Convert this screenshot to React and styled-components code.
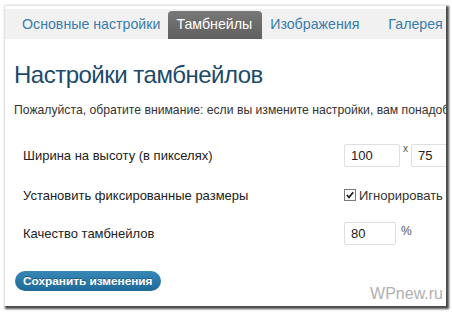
import React from 'react';
import styled, { createGlobalStyle } from 'styled-components';

const Global = createGlobalStyle`
  body {
    margin: 0;
    background: #fff;
    font-family: "Liberation Sans", Arial, sans-serif;
  }
`;

const Page = styled.div`
  width: 452px;
  height: 313px;
  padding: 5px 0 0 4px;
  box-sizing: border-box;
`;

const Frame = styled.div`
  width: 442px;
  height: 301px;
  box-sizing: border-box;
  border-top: 1px solid #e4e4e4;
  border-left: 1px solid #e4e4e4;
  box-shadow: 2px 2px 2px 1px #4a4a4a;
  background: #fff;
  overflow: hidden;
  position: relative;
`;

const TabBar = styled.div`
  display: flex;
  align-items: flex-end;
  margin-top: 3px;
  height: 30px;
  padding-left: 9px;
  background: #f1f1f1;
  white-space: nowrap;
`;

const Tab = styled.div`
  height: 28px;
  line-height: 27px;
  padding: ${p => p.$pad || '0 8px'};
  font-size: 14.2px;
  color: ${p => (p.$active ? '#fff' : '#3a7cab')};
  background: ${p => (p.$active ? 'linear-gradient(#787878, #5f5f5f)' : 'transparent')};
  border-radius: 4px 4px 0 0;
`;

const Content = styled.div`
  padding: 0 0 0 9px;
`;

const Heading = styled.h2`
  margin: 20px 0 0;
  font-size: 24px;
  letter-spacing: -0.5px;
  font-weight: normal;
  color: #1d4a6b;
  line-height: 32px;
`;

const Note = styled.p`
  margin: 12px 0 0;
  font-size: 12.2px;
  color: #333;
  white-space: nowrap;
`;

const Rows = styled.div`
  margin-top: 26px;
  padding-left: 9px;
`;

const Row = styled.div`
  display: flex;
  align-items: center;
  height: 24px;
  margin-bottom: ${p => p.$gap}px;
`;

const Label = styled.div`
  width: 321px;
  flex: none;
  font-size: 13px;
  color: #222;
`;

const Control = styled.div`
  display: flex;
  align-items: center;
  white-space: nowrap;
  font-size: 13px;
  color: #333;
`;

const Input = styled.div`
  width: ${p => p.$w}px;
  height: 23px;
  box-sizing: border-box;
  border: 1px solid #dfdfdf;
  border-radius: 2px;
  padding-left: 6px;
  line-height: 22px;
  font-size: 13px;
  color: #222;
  flex: none;
`;

const Sep = styled.span`
  font-size: ${p => p.$size || 10}px;
  color: #555;
  align-self: flex-start;
  margin: ${p => p.$m || '-1px 3px 0 3px'};
`;

const Check = styled.span`
  width: 10px;
  height: 10px;
  border: 1px solid #7a7a7a;
  background: #fafafa;
  display: inline-flex;
  align-items: center;
  justify-content: center;
  margin-right: 3px;
`;

const Button = styled.div`
  display: inline-block;
  margin: 26px 0 0 1px;
  padding: 0 8px;
  height: 20px;
  line-height: 20px;
  border-radius: 10px;
  background: linear-gradient(#3788b7, #1f6a98);
  color: #fff;
  font-size: 11.8px;
  font-weight: bold;
  text-shadow: 0 -1px 0 rgba(0, 0, 0, 0.3);
`;

const Watermark = styled.div`
  position: absolute;
  right: 3px;
  bottom: 3px;
  font-size: 16px;
  color: #b0b0b0;
`;

export default function App() {
  return (
    <Page>
      <Global />
      <Frame>
        <TabBar>
          <Tab>Основные настройки</Tab>
          <Tab $active $pad="0 10px 0 8px">Тамбнейлы</Tab>
          <Tab $pad="0 21px 0 8px">Изображения</Tab>
          <Tab>Галерея</Tab>
        </TabBar>
        <Content>
          <Heading>Настройки тамбнейлов</Heading>
          <Note>Пожалуйста, обратите внимание: если вы измените настройки, вам понадобится пересоздать тамбнейлы</Note>
          <Rows>
            <Row $gap={16}>
              <Label>Ширина на высоту (в пикселях)</Label>
              <Control>
                <Input $w={56}>100</Input>
                <Sep>x</Sep>
                <Input $w={60}>75</Input>
              </Control>
            </Row>
            <Row $gap={14}>
              <Label>Установить фиксированные размеры</Label>
              <Control>
                <Check>
                  <svg width="8" height="8" viewBox="0 0 8 8">
                    <path d="M0.8 4 L3 6.4 L7.2 1.2" fill="none" stroke="#222" strokeWidth="1.7" />
                  </svg>
                </Check>
                Игнорировать соотношение сторон
              </Control>
            </Row>
            <Row $gap={0}>
              <Label>Качество тамбнейлов</Label>
              <Control>
                <Input $w={52}>80</Input>
                <Sep $size={12} $m="2px 0 0 5px">%</Sep>
              </Control>
            </Row>
          </Rows>
          <Button>Сохранить изменения</Button>
        </Content>
        <Watermark>WPnew.ru</Watermark>
      </Frame>
    </Page>
  );
}
